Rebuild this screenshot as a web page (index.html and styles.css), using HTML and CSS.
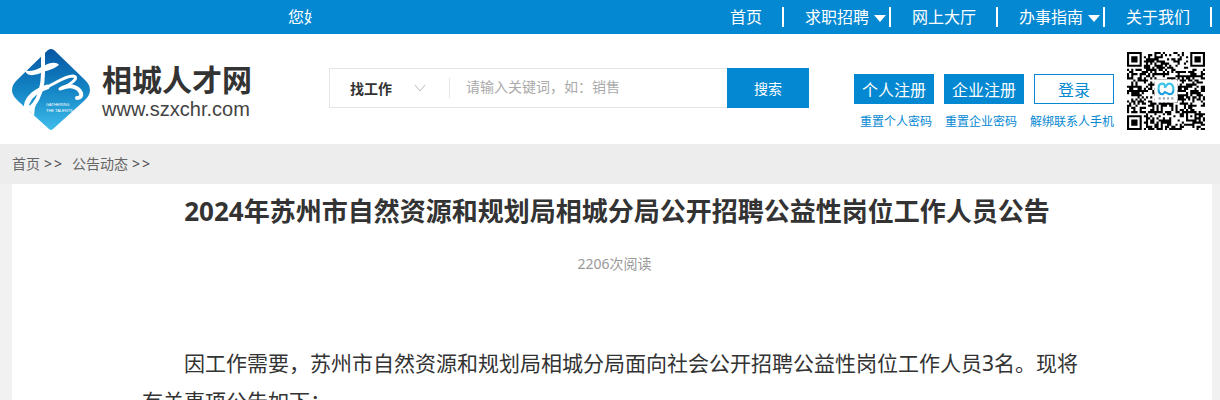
FILE: index.html
```html
<!DOCTYPE html>
<html lang="zh-CN">
<head>
  <meta charset="UTF-8" />
  <meta name="viewport" content="width=device-width, initial-scale=1.0" />
  <title>相城人才网</title>
  <link rel="stylesheet" href="styles.css">
</head>
<body>
  <!-- Top bar -->
  <div class="topbar">
    <div class="wrap topbar-inner">
      <div class="welcome">您好</div>
      <nav class="nav">
        <a href="#">首页</a>
        <a href="#" class="has-menu">求职招聘</a>
        <a href="#">网上大厅</a>
        <a href="#" class="has-menu">办事指南</a>
        <a href="#">关于我们</a>
      </nav>
    </div>
  </div>

  <!-- Header -->
  <header class="header">
    <div class="wrap header-inner">
      <a href="#" class="logo">
        <svg class="logo-mark" viewBox="0 0 78 82" width="78" height="82" aria-hidden="true">
          <defs>
            <linearGradient id="blue" x1="0" y1="0" x2="0" y2="1">
              <stop offset="0" stop-color="#0656a3" />
              <stop offset="0.5" stop-color="#1384c4" />
              <stop offset="1" stop-color="#3fbdec" />
            </linearGradient>
          </defs>
          <path fill="url(#blue)" d="M36 1Q39-1 42 1L72 30Q84 41 72 52L41 80Q39 82 37 80L6 52Q-6 41 6 30Z" />
          <g fill="none" stroke="#fff" stroke-linecap="round" stroke-linejoin="round">
            <path stroke-width="4" d="M31 0V24C31 38 28 48 21 57" />
            <path stroke-width="5" d="M21 57C17 62 13 60 15 54C18 46 26 41 35 38" />
            <path stroke-width="3" d="M35 38C46 33 53 27 61 27C68 28 60 35 48 40" />
            <path stroke-width="4" d="M50 39C60 35 67 39 69 44C70 48 67 49 65 49" />
          </g>
          <path fill="#fff" d="M13 21C19 24 25 20 32 17C38 13 45 13 47 16C42 20 37 21 31 23C24 26 15 29 13 21Z" />
          <path fill="#fff" d="M12 56L22 67L23 57Z" />
          <text class="logo-note" x="34" y="57">GATHERING</text>
          <text class="logo-note" x="34" y="63">THE TALENTS</text>
        </svg>
        <span class="logo-text">
          <strong>相城人才网</strong>
          <span>www.szxchr.com</span>
        </span>
      </a>

      <form class="search">
        <div class="search-type">
          <select aria-label="搜索类型">
            <option>找工作</option>
          </select>
          <svg viewBox="0 0 12 8" width="12" height="8" aria-hidden="true">
            <path d="M1 1L6 7L11 1" fill="none" stroke="#bbb" />
          </svg>
        </div>
        <input type="text" aria-label="关键词" placeholder="请输入关键词，如：销售" />
        <button type="submit">搜索</button>
      </form>

      <div class="account">
        <div class="account-buttons">
          <button type="button">个人注册</button>
          <button type="button">企业注册</button>
          <button type="button" class="outline">登录</button>
        </div>
        <div class="account-links">
          <a href="#">重置个人密码</a>
          <a href="#">重置企业密码</a>
          <a href="#">解绑联系人手机</a>
        </div>
      </div>

      <svg class="qr" viewBox="0 0 37 37" width="78" height="78" aria-hidden="true">
        <path id="qr-dots" />
        <rect x="13" y="13" width="11" height="11" rx="1" fill="#fff" />
        <path d="M15 18V17Q15 15 17 15Q18 15 18 17Q19 15 20 15Q22 15 22 18" fill="none" stroke="#3fc3e6" stroke-width="1" />
        <path d="M15 18Q15 20 17 20L18 19L20 20Q22 20 22 18" fill="none" stroke="#1d9fe0" stroke-width="1" />
        <path d="M15 22H22" stroke="#9ab" stroke-width="1" stroke-dasharray="1 1" />
      </svg>
    </div>
  </header>

  <!-- Breadcrumb -->
  <div class="crumbs">
    <div class="wrap crumbs-inner">
      <a href="#">首页</a>
      <span>&gt;</span><span>&gt;</span>
      <a href="#">公告动态</a>
      <span>&gt;</span><span>&gt;</span>
    </div>
  </div>

  <main class="wrap">
    <article class="article">
      <h1>2024年苏州市自然资源和规划局相城分局公开招聘公益性岗位工作人员公告</h1>
      <p class="reads">2206次阅读</p>
      <div class="content">
        <p>因工作需要，苏州市自然资源和规划局相城分局面向社会公开招聘公益性岗位工作人员3名。现将有关事项公告如下：</p>
      </div>
    </article>
  </main>

  <script src="qr.js"></script>
</body>
</html>
```
FILE: styles.css
```css
body {
  margin: 0;
  height: 100vh;
  overflow: hidden;
  font-family: "Noto Sans", "Noto Sans CJK SC", sans-serif;
  font-size: 14px;
  color: #333;
  background: #f1f1f1;
}
a {
  color: inherit;
  text-decoration: none;
}
button, input, select {
  font-family: inherit;
  margin: 0;
  padding: 0;
  border: none;
  border-radius: 0;
}
.wrap {
  max-width: 1200px;
  margin: 0 8px 0 12px;
}

/* top bar */
.topbar {
  background: #0488d2;
  color: #fff;
  font-size: 16px;
  line-height: 34px;
}
.topbar-inner {
  display: flex;
  justify-content: space-between;
}
.welcome {
  box-sizing: border-box;
  width: 300px;
  padding-left: 276px;
  overflow: hidden;
  white-space: nowrap;
}
.nav {
  display: flex;
  align-items: center;
}
.nav a {
  position: relative;
  padding: 0 20px 0 21px;
  line-height: 20px;
  border-right: 2px solid #fff;
}
.nav .has-menu::after {
  content: "";
  position: absolute;
  right: 3px;
  top: 8px;
  border: 6px solid transparent;
  border-top: 7px solid #fff;
  border-bottom: none;
}

/* header */
.header {
  background: #fff;
}
.header-inner {
  display: flex;
  align-items: center;
  height: 110px;
}
.logo {
  display: flex;
  align-items: center;
  gap: 12px;
  flex: none;
  width: 317px;
  padding-top: 2px;
}
.logo-note {
  font-family: "Liberation Sans", sans-serif;
  font-size: 4px;
  fill: #fff;
}
.logo-text {
  display: flex;
  flex-direction: column;
  padding-top: 4px;
}
.logo-text strong {
  font-size: 30px;
  line-height: 34px;
}
.logo-text span {
  font-family: "Liberation Sans", sans-serif;
  font-size: 20px;
  line-height: 24px;
  color: #444;
}
.search {
  display: flex;
  flex: none;
  width: 480px;
  height: 40px;
  margin-bottom: 2px;
}
.search-type {
  display: flex;
  align-items: center;
  box-sizing: border-box;
  width: 121px;
  padding: 0 24px 0 20px;
  border: 1px solid #e5e5e5;
  border-right: none;
  background: linear-gradient(#e5e5e5, #e5e5e5) right center / 1px 20px no-repeat;
}
.search-type select {
  appearance: none;
  flex: 1;
  font-size: 14px;
  font-weight: bold;
  color: #333;
  background: none;
}
.search input {
  flex: 1;
  min-width: 0;
  padding: 0 16px 3px;
  font-size: 14px;
  border: 1px solid #e5e5e5;
  border-width: 1px 0;
}
.search input::placeholder {
  color: #aaa;
}
.search button {
  width: 82px;
  font-size: 14px;
  color: #fff;
  background: #0488d2;
}
.account {
  flex: none;
  width: 260px;
  margin-left: 45px;
  padding-top: 28px;
}
.account-buttons {
  display: flex;
  gap: 10px;
}
.account-buttons button {
  flex: 1;
  height: 30px;
  font-size: 16px;
  color: #fff;
  background: #0488d2;
  border: 1px solid #0488d2;
}
.account-buttons .outline {
  color: #0488d2;
  background: #fff;
}
.account-links {
  display: flex;
  justify-content: space-between;
  padding: 8px 0 0 6px;
  font-size: 12px;
  line-height: 20px;
  color: #0488d2;
}
.qr {
  flex: none;
  margin: 3px 0 0 13px;
}

/* breadcrumb */
.crumbs {
  background: #ededed;
}
.crumbs-inner {
  display: flex;
  line-height: 40px;
  color: #666;
}
.crumbs a {
  margin-right: 4px;
}
.crumbs span {
  width: 10px;
  color: #444;
}
.crumbs span + a {
  margin-left: 8px;
}

/* article */
.article {
  min-height: 300px;
  background: #fff;
}
.article h1 {
  margin: 0;
  padding: 7px 0 0 10px;
  font-size: 26px;
  line-height: 40px;
  text-align: center;
}
.reads {
  margin: 0;
  padding: 23px 0 0 5px;
  line-height: 20px;
  text-align: center;
  color: #999;
}
.content {
  padding: 70px 130px 0;
  font-size: 21px;
  line-height: 38px;
}
.content p {
  margin: 0;
  text-indent: 2em;
}
```
FILE: qr.js
```js
// Draws the code as one path, a unit square for each dark module
const size = 37;
let seed = 20;
let d = "";

function finder(x, y) {
  const m = Math.max(Math.abs(x - 3), Math.abs(y - 3));
  return m === 3 || m <= 1;
}

for (let y = 0; y < size; y++) {
  for (let x = 0; x < size; x++) {
    seed = (Math.imul(seed, 1103515245) + 12345) >>> 0;
    let dark = (seed >>> 28) % 2 === 1;
    if (x < 8 && y < 8) dark = x < 7 && y < 7 && finder(x, y);
    else if (x > 28 && y < 8) dark = x > 29 && y < 7 && finder(x - 30, y);
    else if (x < 8 && y > 28) dark = x < 7 && y > 29 && finder(x, y - 30);
    else if (x > 27 && x < 33 && y > 27 && y < 33) {
      dark = Math.max(Math.abs(x - 30), Math.abs(y - 30)) !== 1;
    }
    if (dark) d += `M${x} ${y}h1v1h-1z`;
  }
}

document.getElementById("qr-dots").setAttribute("d", d);
```
